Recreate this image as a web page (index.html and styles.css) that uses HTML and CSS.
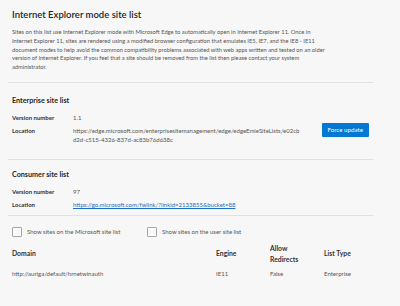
FILE: index.html
```html
<!DOCTYPE html>
<html lang="en">

<head>
    <meta charset="UTF-8">
    <meta name="viewport" content="width=device-width, initial-scale=1.0">
    <link rel="stylesheet" href="styles.css">
</head>

<body>
    <div id="page">
        <div class="section intro">
            <h1 class="title">Internet Explorer mode site list</h1>
            <p class="description">
                Sites on this list use Internet Explorer mode with Microsoft Edge to automatically open in Internet Explorer 11. Once in<br>
                Internet Explorer 11, sites are rendered using a modified browser configuration that emulates IE5, IE7, and the IE8 - IE11<br>
                document modes to help avoid the common compatibility problems associated with web apps written and tested on an older<br>
                version of Internet Explorer. If you feel that a site should be removed from the list then please contact your system<br>
                administrator.
            </p>
        </div>

        <div class="section enterprise">
            <h2 class="heading">Enterprise site list</h2>
            <div class="info">
                <span class="label">Version number</span>
                <span class="value">1.1</span>
                <span></span>
                <span class="label">Location</span>
                <span class="value url">https://edge.microsoft.com/enterprisesitemanagement/edge/edgeEmieSiteLists/e02cbd2d-c515-4326-837d-ac83b76d638c</span>
                <button class="force-update">Force update</button>
            </div>
        </div>

        <div class="section consumer">
            <h2 class="heading">Consumer site list</h2>
            <div class="info">
                <span class="label">Version number</span>
                <span class="value">97</span>
                <span></span>
                <span class="label">Location</span>
                <a class="value link" href="#">https://go.microsoft.com/fwlink/?linkid=2133855&amp;bucket=88</a>
                <span></span>
            </div>
        </div>

        <div class="options">
            <label class="check"><span class="box"></span>Show sites on the Microsoft site list</label>
            <label class="check"><span class="box"></span>Show sites on the user site list</label>
        </div>

        <div class="sites">
            <div class="row head">
                <span>Domain</span>
                <span>Engine</span>
                <span>Allow<br>Redirects</span>
                <span>List Type</span>
            </div>
            <div class="row">
                <span>http://auriga/default/hrnetwinauth</span>
                <span>IE11</span>
                <span>False</span>
                <span>Enterprise</span>
            </div>
        </div>
    </div>
</body>

</html>
```

FILE: styles.css
```css
body {
    margin: 0;
    padding: 0;
    background: #f7f7f7;
    color: #555555;
    font-family: Lato, "Noto Sans", sans-serif;
    font-size: 6px;
}

#page {
    width: 365px;
    padding: 8px 0 0 8px;
}

.section {
    border-bottom: 1px solid #e2e2e2;
    padding: 0 4px 10px 4px;
}

.section.enterprise {
    padding-top: 13px;
    padding-bottom: 15px;
}

.section.consumer {
    padding-top: 10px;
    padding-bottom: 6px;
}

.title {
    color: #262626;
    font-size: 9.5px;
    font-weight: 600;
    line-height: 14px;
    margin: 0 0 6px 0;
}

.description {
    font-size: 5.75px;
    line-height: 8.8px;
    margin: 0;
    white-space: nowrap;
}

.heading {
    color: #262626;
    font-size: 7.2px;
    font-weight: 700;
    line-height: 10px;
    margin: 0 0 7px 0;
}

.info {
    display: grid;
    grid-template-columns: 61px 229px 1fr;
    row-gap: 4px;
    align-items: start;
}

.label {
    color: #333333;
    font-weight: 700;
    line-height: 9px;
}

.value {
    line-height: 9px;
}

.url {
    word-break: break-all;
}

.link {
    color: #1a6fc4;
    text-decoration: underline;
    white-space: nowrap;
}

.force-update {
    justify-self: end;
    margin-top: -3px;
    background: #0078d4;
    border: none;
    border-radius: 1px;
    color: #ffffff;
    font-family: inherit;
    font-size: 6.2px;
    height: 14px;
    padding: 0 6px;
    white-space: nowrap;
}

.options {
    display: flex;
    padding: 11px 4px 0 4px;
}

.check {
    display: flex;
    align-items: center;
    gap: 5px;
    width: 135px;
    line-height: 9px;
}

.box {
    width: 8px;
    height: 8px;
    border: 1px solid #a6a6a6;
    border-radius: 1px;
    background: #fafafa;
}

.sites {
    padding: 6px 4px 0 4px;
}

.row {
    display: grid;
    grid-template-columns: 204px 54px 54px 1fr;
    align-items: center;
    line-height: 9px;
}

.row.head {
    color: #333333;
    font-size: 6.8px;
    font-weight: 700;
    line-height: 11px;
    margin-bottom: 4px;
}
```
